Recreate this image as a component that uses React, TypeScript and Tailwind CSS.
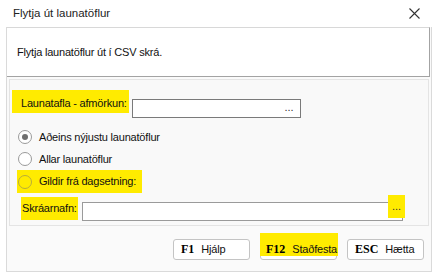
const font = { fontFamily: '"Liberation Sans", Arial, sans-serif' };

function Radio({ checked, label, mark }: { checked?: boolean; label: string; mark?: boolean }) {
  return (
    <div
      className={`flex items-center whitespace-nowrap ${mark ? 'h-[23px] bg-[#ffeb00] w-[125px] -ml-[1px] pl-[1px]' : 'h-[22px]'}`}
    >
      <span
        className={`w-[14px] h-[14px] rounded-full border flex items-center justify-center ${
          mark ? 'border-[#b8ad3a]' : 'border-[#9a9a9a] bg-white'
        }`}
      >
        {checked && <span className="w-[6px] h-[6px] rounded-full bg-[#6f6f6f]" />}
      </span>
      <span className="ml-[7px] text-[11px] tracking-[-0.2px] text-[#111]">{label}</span>
    </div>
  );
}

function KeyButton({ k, label, mark }: { k: string; label: string; mark?: boolean }) {
  return (
    <button className="w-[77px] h-[21px] rounded-[3px] border border-[#c4c4c4] bg-white flex items-center pl-[7px] whitespace-nowrap">
      <span
        className={`flex items-center gap-[7px] ${
          mark ? 'h-[23px] -mt-[10px] pt-[10px] bg-[#ffeb00] -ml-[8px] pl-[6px] pr-[1px]' : 'h-[19px]'
        }`}
      >
        <span
          className="text-[12px] leading-[13px] font-bold text-black"
          style={{ fontFamily: '"Liberation Serif", "Times New Roman", serif' }}
        >
          {k}
        </span>
        <span className="text-[11px] leading-[13px] tracking-[-0.2px] text-[#111]">{label}</span>
      </span>
    </button>
  );
}

export default function App() {
  return (
    <div className="w-[437px] h-[272px] bg-white overflow-hidden" style={font}>
      <div className="h-[27px] flex items-center justify-between pl-[13px] pr-[17px]">
        <span className="text-[11.5px] text-[#222]">Flytja út launatöflur</span>
        <svg width="11" height="11" viewBox="0 0 11 11">
          <path d="M0.5 0.5 L10.5 10.5 M10.5 0.5 L0.5 10.5" stroke="#333" strokeWidth="1.1" />
        </svg>
      </div>
      <div className="mx-[6px] w-[426px] h-[245px] border-x border-b border-[#dadada] bg-[#fafafa] flex flex-col">
        <div className="h-[50px] bg-white border-t border-[#d8d8d8] border-b border-r border-b-[#a3a3a3] border-r-[#a3a3a3] mr-[1px] flex items-center pl-[10px]">
          <span className="text-[11px] tracking-[-0.2px] text-[#111]">Flytja launatöflur út í CSV skrá.</span>
        </div>
        <div className="mt-[2px] mx-[2px] h-[147px] border border-[#e4e4e4] bg-[#f9f9f9] flex flex-col">
          <div className="flex items-start mt-[10px] ml-[2px] h-[28px]">
            <span className="bg-[#ffeb00] h-[23px] flex items-center pl-[9px] pr-[2px] min-w-[115px] text-[11px] tracking-[-0.2px] text-[#111] whitespace-nowrap pt-[4px]">
              Launatafla - afmörkun:
            </span>
            <div className="ml-[3px] mt-[9px] w-[169px] h-[19px] border border-[#7a7a7a] bg-white flex items-center justify-end pr-[6px]">
              <span className="text-[11px] text-[#333] leading-none -mt-[3px]">...</span>
            </div>
          </div>
          <div className="flex flex-col mt-[8px] ml-[8px]">
            <Radio checked label="Aðeins nýjustu launatöflur" />
            <Radio label="Allar launatöflur" />
            <Radio mark label="Gildir frá dagsetning:" />
          </div>
          <div className="flex items-start mt-[4px] ml-[11px]">
            <span className="bg-[#ffeb00] h-[23px] flex items-center pl-[1px] w-[57px] text-[11px] tracking-[-0.2px] text-[#111] whitespace-nowrap">
              Skráarnafn:
            </span>
            <div className="ml-[4px] mt-[5px] w-[321px] h-[19px] border border-[#9a9a9a] bg-white relative">
              <span className="absolute right-[-3px] -top-[8px] w-[17px] h-[23px] bg-[#ffeb00] flex items-center justify-center text-[11px] text-[#333]">
                ...
              </span>
            </div>
          </div>
        </div>
        <div className="flex justify-end gap-[10px] mt-[13px] pr-[7px]">
          <KeyButton k="F1" label="Hjálp" />
          <KeyButton k="F12" label="Staðfesta" mark />
          <KeyButton k="ESC" label="Hætta" />
        </div>
      </div>
    </div>
  );
}
